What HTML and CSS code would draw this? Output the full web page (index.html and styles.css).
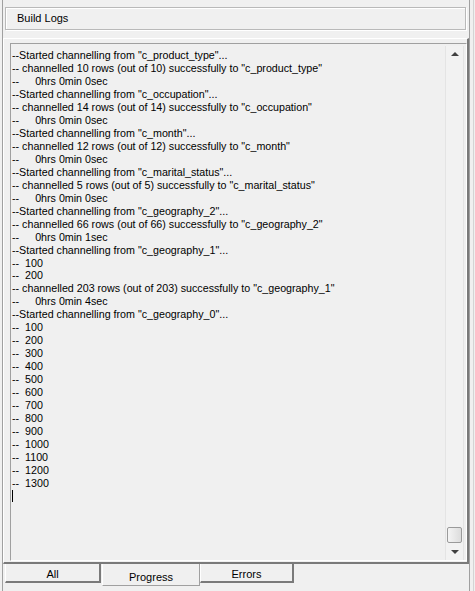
FILE: index.html
```html
<!DOCTYPE html>
<html lang="en">
<head>
  <meta charset="UTF-8">
  <title>Build Logs</title>
  <link rel="stylesheet" href="styles.css">
</head>
<body>

<div class="frame">
  <div class="window">

    <div class="header">Build Logs</div>

    <div class="panel">
      <div class="log">
        <div class="log-text" id="logText"></div>
        <div class="scrollbar">
          <div class="arrow up"></div>
          <div class="track"><div class="thumb"></div></div>
          <div class="arrow down"></div>
        </div>
      </div>
    </div>

    <div class="tabs">
      <div class="tab">All</div>
      <div class="tab selected">Progress</div>
      <div class="tab">Errors</div>
    </div>

  </div>
</div>

<script>
  const tables = [
    ["c_product_type", 10, "0sec"],
    ["c_occupation", 14, "0sec"],
    ["c_month", 12, "0sec"],
    ["c_marital_status", 5, "0sec"],
    ["c_geography_2", 66, "1sec"]
  ];

  const lines = [];
  for (const t of tables) {
    lines.push(`--Started channelling from "${t[0]}"...`);
    lines.push(`-- channelled ${t[1]} rows (out of ${t[1]}) successfully to "${t[0]}"`);
    lines.push(`--<span class="tab-gap"></span>0hrs 0min ${t[2]}`);
  }

  lines.push(`--Started channelling from "c_geography_1"...`);
  lines.push(`--  100`);
  lines.push(`--  200`);
  lines.push(`-- channelled 203 rows (out of 203) successfully to "c_geography_1"`);
  lines.push(`--<span class="tab-gap"></span>0hrs 0min 4sec`);
  lines.push(`--Started channelling from "c_geography_0"...`);
  for (let i = 100; i <= 1300; i += 100) {
    lines.push(`--  ${i}`);
  }

  let html = "";
  for (const l of lines) {
    html += `<div class="line">${l}</div>`;
  }
  html += `<div class="line"><span class="caret"></span></div>`;
  document.getElementById("logText").innerHTML = html;
</script>

</body>
</html>
```

FILE: styles.css
```css
html, body {
  margin: 0;
  padding: 0;
  background-color: #f0f0f0;
}
body {
  font-family: "Liberation Sans", Arial, sans-serif;
  font-size: 11px;
  color: #000;
}
.frame {
  width: 474px;
  height: 591px;
  border-right: 1px solid #d4d4d4;
  box-sizing: border-box;
  padding-left: 2px;
}
.window {
  width: 468px;
  height: 591px;
  box-sizing: border-box;
  border-left: 1px solid #a0a0a0;
  border-right: 1px solid #a0a0a0;
  display: flex;
  flex-direction: column;
}
.header {
  margin: 7px 3px 0 2px;
  height: 23px;
  box-sizing: border-box;
  border: 1px solid #b9b9b9;
  box-shadow: inset 1px 1px 0 #ffffff, 1px 1px 0 #ffffff;
  padding-left: 11px;
  line-height: 21px;
}
.panel {
  margin-top: 8px;
  height: 526px;
  box-sizing: border-box;
  border-top: 1px solid #ffffff;
  border-left: 1px solid #ffffff;
  border-right: 2px solid #7a7a7a;
  border-bottom: 2px solid #7a7a7a;
  padding: 4px 0 1px 6px;
  display: flex;
}
.log {
  flex: 1;
  display: flex;
  border-top: 1px solid #a0a0a0;
  border-left: 1px solid #a0a0a0;
  border-bottom: 1px solid #ffffff;
  border-right: 1px solid #ffffff;
}
.log-text {
  flex: 1;
  padding: 5px 0 0 1px;
  white-space: pre;
  overflow: hidden;
  font-size: 10.7px;
}
.line {
  height: 12.97px;
  line-height: 13px;
}
.tab-gap {
  display: inline-block;
  width: 16px;
}
.caret {
  display: inline-block;
  width: 1px;
  height: 12px;
  background-color: #000;
  vertical-align: -2px;
}
.scrollbar {
  width: 17px;
  margin: 2px 2px 0 0;
  display: flex;
  flex-direction: column;
  background-color: #f2f2f2;
  border-left: 1px solid #e4e4e4;
  border-right: 1px solid #e4e4e4;
}
.arrow {
  height: 17px;
  position: relative;
}
.arrow.up::after, .arrow.down::after {
  content: "";
  position: absolute;
  left: 5px;
  border-left: 4px solid transparent;
  border-right: 4px solid transparent;
}
.arrow.up::after {
  top: 6px;
  border-bottom: 4px solid #404040;
}
.arrow.down::after {
  top: 7px;
  border-top: 4px solid #404040;
}
.track {
  flex: 1;
  display: flex;
  flex-direction: column;
  justify-content: flex-end;
}
.thumb {
  height: 14px;
  margin: 0 1px 0 1px;
  border: 1px solid #9a9a9a;
  border-radius: 2px;
  background: linear-gradient(to right, #f4f4f4, #dcdcdc);
}
.tabs {
  display: flex;
  padding-left: 2px;
}
.tab {
  width: 96px;
  height: 19px;
  box-sizing: border-box;
  border-left: 1px solid #ffffff;
  border-right: 2px solid #7a7a7a;
  border-bottom: 2px solid #7a7a7a;
  text-align: center;
  padding-top: 3px;
  line-height: 14px;
}
.tab.selected {
  width: 98px;
  height: 22px;
  margin-left: 1px;
  border-bottom: 1px solid #a0a0a0;
  border-right: 1px solid #a0a0a0;
  padding-top: 6px;
}
.tab.selected + .tab {
  width: 94px;
}
```
